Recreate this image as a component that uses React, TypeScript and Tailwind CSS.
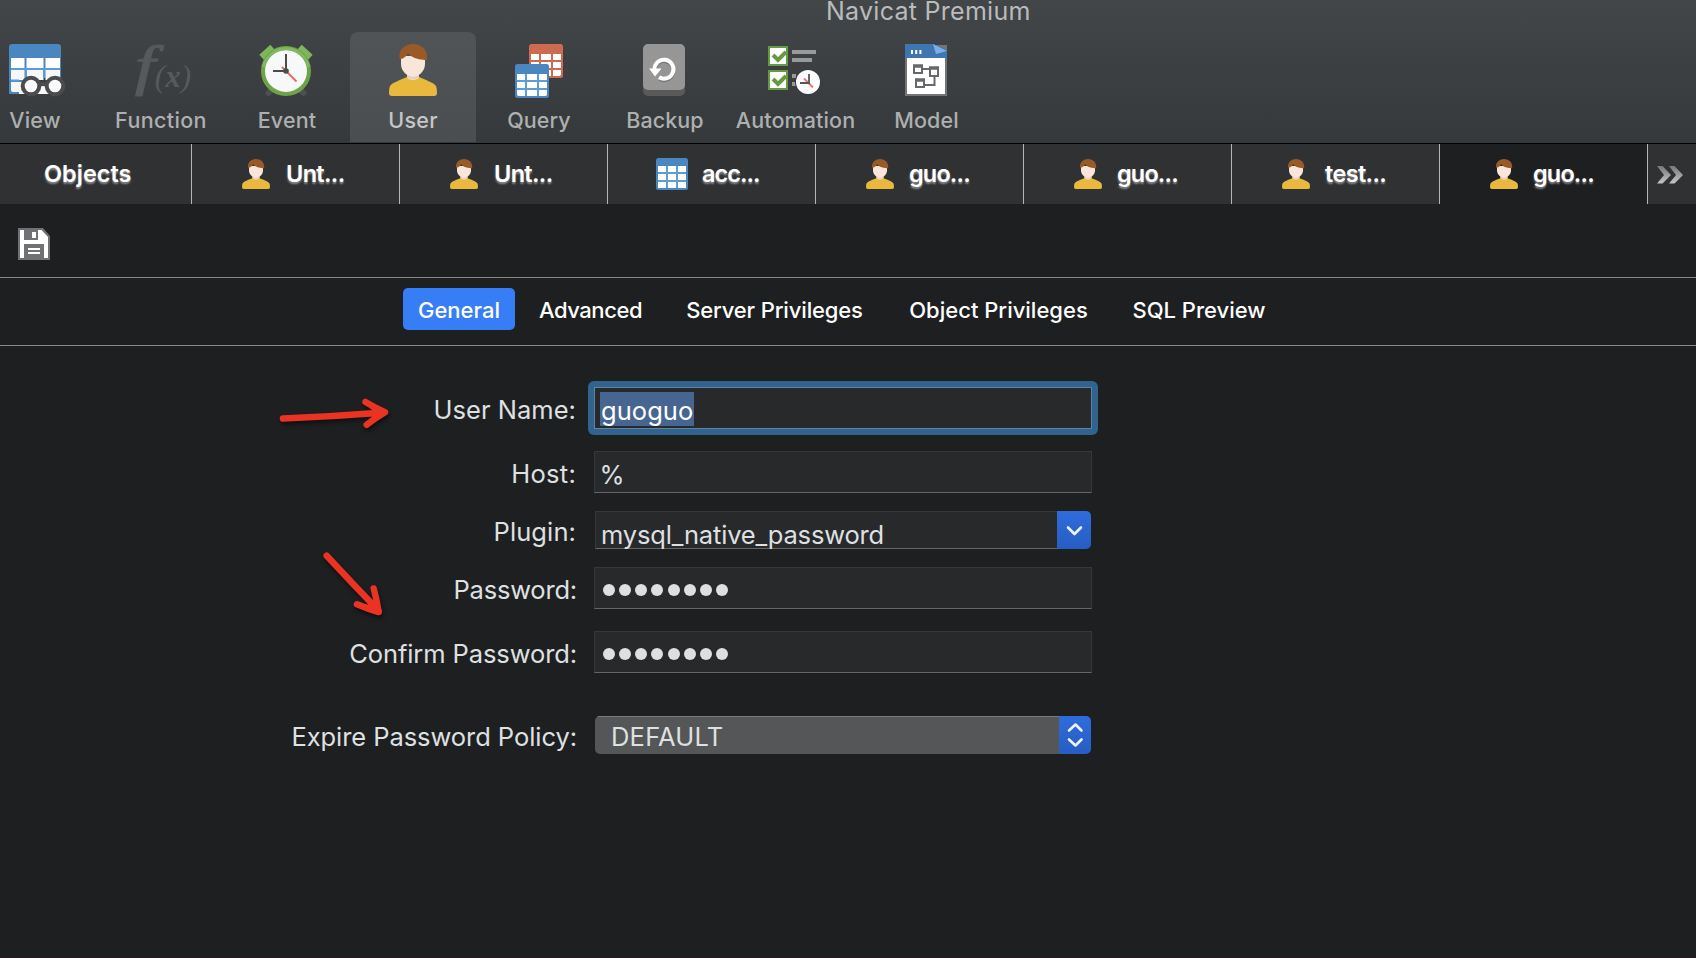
import type { ReactNode } from "react";

function ViewIcon() {
  return (
    <svg className="ml-[4px]" width="60" height="56" viewBox="0 0 60 56">
      <path d="M2 5a3 3 0 0 1 3-3h46a3 3 0 0 1 3 3v31H24v16H2z" fill="#4a86bf" />
      <path d="M4 16h13.500v10H4zM19.500 16h17v10h-17zM38.500 16H53v10H38.500z" fill="#fff" />
      <path d="M4 28h13.500v10H4zM19.500 28h17v10h-17zM38.500 28H53v10H38.500zM4 40h14v10H6a2 2 0 0 1-2-2zM12 42h36v10H12z" fill="#f6f7f9" />
      <path d="M4 38.500h8M19 28v8M37 28v8" stroke="#5b9bd8" strokeWidth="2" />
      <path d="M4 27h49" stroke="#5b9bd8" strokeWidth="2" />
      <g fill="#fafbfc" stroke="#4b4c4e" strokeWidth="4">
        <path d="M32 43q4-2 8 0" fill="none" />
        <circle cx="24" cy="44" r="8.300" />
        <circle cx="48" cy="44" r="8.300" />
      </g>
    </svg>
  );
}

function FunctionIcon() {
  return (
    <div className="flex h-14 w-[60px] items-end font-['Liberation_Serif',serif] text-[#58595a] italic">
      <span className="w-[24px] origin-left scale-x-[1.35] pl-[3px] text-[54px] leading-[64px] [-webkit-text-stroke:1.2px_#58595a]">f</span>
      <span className="text-[31px] leading-[42px]">
        (<span className="font-bold">x</span>)
      </span>
    </div>
  );
}

function EventIcon() {
  return (
    <svg className="-ml-[2px]" width="60" height="56" viewBox="0 0 60 56">
      <path d="M12.500 51l6-6M47.500 51l-6-6" stroke="#4d5051" strokeWidth="6" strokeLinecap="round" />
      <path d="M9 13l5-4.500M51 13l-5-4.500" stroke="#7fb65c" strokeWidth="8" strokeLinecap="square" />
      <circle cx="30" cy="29" r="23" fill="#f7f8fa" stroke="#6fa348" strokeWidth="4" />
      <path d="M7.500 25A23 23 0 0 1 52.500 25" fill="none" stroke="#82b860" strokeWidth="3" />
      <path d="M26 25l14.500 14.500" stroke="#e2705c" strokeWidth="2" />
      <path d="M30 12v17H17" fill="none" stroke="#4a4c4e" strokeWidth="2" />
      <circle cx="30" cy="29" r="2.800" fill="#4a4c4e" />
    </svg>
  );
}

function Person({ className }: { className: string }) {
  return (
    <svg className={className} viewBox="0 0 48 52" preserveAspectRatio="none">
      <path d="M18 30h12v7l-6 4-6-4z" fill="#efdcd0" />
      <path d="M18 33C12 36 4 38 1 42q-1 2-1 7a3 3 0 0 0 3 3h42a3 3 0 0 0 3-3q0-5-1-7C44 38 36 36 30 33q-1 3-6 3t-6-3z" fill="#e9b93e" />
      <path d="M12 12h24v8c0 7-6 12.500-12 12.500S12 27 12 20z" fill="#fae6d9" />
      <path d="M18 31q6 4 12 0v2q-6 4-12 0z" fill="#e4cdbf" />
      <path d="M10.500 15C9 5 17 0 24 0c9 0 15 6 14 16h-2Q23 15 19 9q-3 6-8.500 6z" fill="#9a5a28" />
    </svg>
  );
}

function QueryIcon() {
  return (
    <svg width="60" height="56" viewBox="0 0 60 56">
      <rect x="20" y="2" width="34" height="34" rx="2.500" fill="#cd6a50" />
      <path d="M22 12h8v6h-8zM32 12h10v6H32zM44 12h8v6h-8zM22 20h8v6h-8zM32 20h10v6H32zM44 20h8v6h-8zM22 28h8v6h-8zM32 28h10v6H32zM44 28h8v4q0 2-2 2h-6z" fill="#fff" />
      <rect x="6" y="22" width="34" height="34" rx="2.500" fill="#4a86bf" />
      <path d="M8 32h30v22H8z" fill="#5e9cd6" />
      <path d="M8 32h8v6H8zM18 32h10v6H18zM30 32h8v6h-8zM8 40h8v6H8zM18 40h10v6H18zM30 40h8v6h-8zM8 48h8v6h-6q-2 0-2-2zM18 48h10v6H18zM30 48h8v4q0 2-2 2h-6z" fill="#fff" />
    </svg>
  );
}

function BackupIcon() {
  return (
    <svg width="60" height="56" viewBox="0 0 60 56">
      <rect x="8" y="9" width="42" height="45" rx="5" fill="#59595a" />
      <rect x="8" y="2" width="42" height="46" rx="5" fill="#969697" />
      <path d="M19.500 29.500A9.500 9.500 0 1 1 24.500 37" fill="none" stroke="#000" strokeOpacity=".2" strokeWidth="4" />
      <path d="M19.500 28A9.500 9.500 0 1 1 24 35.300" fill="none" stroke="#fff" strokeWidth="4" />
      <path d="M14 26.500h12.500L20 34.500z" fill="#fff" />
    </svg>
  );
}

function AutomationIcon() {
  return (
    <svg className="-ml-[2px]" width="60" height="56" viewBox="0 0 60 56">
      <g fill="#fff" stroke="#649a41" strokeWidth="2">
        <rect x="4" y="5" width="18" height="18" />
        <rect x="4" y="29" width="18" height="18" />
      </g>
      <path d="M8 13l5 5 8-8M8 37l5 5 8-8" fill="none" stroke="#649a41" strokeWidth="4" />
      <path d="M27 10h24M27 18h20M27 34h4M27 42h4" stroke="#98999b" strokeWidth="4" />
      <circle cx="43" cy="40" r="13" fill="#3a3d3f" />
      <circle cx="43" cy="40" r="12" fill="#fdfdfe" />
      <path d="M39 36.500l9 9" stroke="#e57c68" strokeWidth="2" />
      <path d="M44 32v9h-9" fill="none" stroke="#55575a" strokeWidth="1.800" />
    </svg>
  );
}

function ModelIcon() {
  return (
    <svg className="-ml-[2px]" width="60" height="56" viewBox="0 0 60 56">
      <path d="M9 3h42v51H9z" fill="#737477" />
      <path d="M11 16h38v36H11z" fill="#fff" />
      <path d="M9 2h28l14 6v8H9z" fill="#3f76b0" />
      <path d="M37 2l14 7-11 3z" fill="#79b0ea" />
      <path d="M15 8h2v4h-2zM19.200 8h2v4h-2zM23.400 8h2v4h-2z" fill="#fff" />
      <g fill="none" stroke="#67686b" strokeWidth="2">
        <path d="M26 27h8M29 43h9.500v-8" />
        <path d="M18 24h8v7h-8zM34 26h8v8h-8zM20 38h8v7h-8z" fill="#fff" />
        <path d="M17 24h10M33 26h10M19 38h10" strokeWidth="3.500" />
      </g>
    </svg>
  );
}

function TableIcon() {
  return (
    <svg width="32" height="32" viewBox="0 0 32 32">
      <rect width="32" height="32" rx="2.500" fill="#4a86bf" />
      <path d="M2 8h28v22H2z" fill="#5e9cd6" />
      <path d="M2 8h8v6H2zM12 8h8v6h-8zM22 8h8v6h-8zM2 16h8v6H2zM12 16h8v6h-8zM22 16h8v6h-8zM2 24h8v6H2zM12 24h8v6h-8zM22 24h8v6h-8z" fill="#fff" />
    </svg>
  );
}

function SaveIcon() {
  return (
    <svg width="32" height="32" viewBox="0 0 32 32">
      <path d="M0 0h25l7 8v24H0z" fill="#707174" />
      <path d="M2 2h21.500L30 9v21H2z" fill="#fff" />
      <path d="M6 2h14v10H6zM6 16h20v14H6z" fill="#707174" />
      <path d="M14 4h4v6h-4zM10 20h12v2H10zM10 24h12v2H10z" fill="#fff" />
    </svg>
  );
}

type Tool = { label: string; icon: ReactNode; cell: string; text: string; active?: boolean };

const tools: Tool[] = [
  { label: "View", icon: <ViewIcon />, cell: "-ml-[28px] w-[126px]", text: "tracking-[0.17px]" },
  { label: "Function", icon: <FunctionIcon />, cell: "w-[126px]", text: "tracking-[0.36px]" },
  { label: "Event", icon: <EventIcon />, cell: "w-[126px]", text: "tracking-[0.19px]" },
  { label: "User", icon: <Person className="my-[2px] h-[52px] w-[48px]" />, cell: "w-[126px]", text: "tracking-[0.27px]", active: true },
  { label: "Query", icon: <QueryIcon />, cell: "w-[126px]", text: "tracking-[0.12px]" },
  { label: "Backup", icon: <BackupIcon />, cell: "w-[126px]", text: "tracking-[0.05px]" },
  { label: "Automation", icon: <AutomationIcon />, cell: "w-[135px]", text: "tracking-[0.12px]" },
  { label: "Model", icon: <ModelIcon />, cell: "w-[127px]", text: "tracking-[0.15px]" },
];

type Tab = { label: string; table?: boolean; gap: string; active?: boolean };

const tabs: Tab[] = [
  { label: "Unt...", gap: "pl-[16px] tracking-[-0.65px]" },
  { label: "Unt...", gap: "pl-[16px] tracking-[-0.65px]" },
  { label: "acc...", table: true, gap: "pl-[14px] tracking-[-0.95px]" },
  { label: "guo...", gap: "pl-[15px] tracking-[-0.85px]" },
  { label: "guo...", gap: "pl-[15px] tracking-[-0.85px]" },
  { label: "test...", gap: "pl-[15px] tracking-[-0.65px]" },
  { label: "guo...", gap: "pl-[15px] tracking-[-0.85px]", active: true },
];

const sections = [
  { label: "General", cls: "w-[112px] rounded-[5px] bg-[#377df5]" },
  { label: "Advanced", cls: "w-[151px] tracking-[-0.43px]" },
  { label: "Server Privileges", cls: "w-[217px] tracking-[-0.14px]" },
  { label: "Object Privileges", cls: "w-[231px]" },
  { label: "SQL Preview", cls: "w-[170px]" },
];

function Row({ label, cls, labelCls, children }: { label: string; cls: string; labelCls: string; children: ReactNode }) {
  return (
    <div className={`flex items-center ${cls}`}>
      <label className={`w-[576px] shrink-0 text-right leading-[32px] text-[#dfe0e1] ${labelCls}`}>{label}</label>
      {children}
    </div>
  );
}

const fieldCls =
  "ml-[18px] flex h-full w-[498px] items-center border border-[#363738] border-b-[#646566] bg-[#28292b] pl-[6px]";

function Dots() {
  return (
    <div className="flex gap-[4.150px] pl-[2px] pt-[4px]">
      {Array.from({ length: 8 }, (_, i) => (
        <span key={i} className="size-[12px] rounded-full bg-[#dedfe1]" />
      ))}
    </div>
  );
}

export default function App() {
  return (
    <div className="relative flex h-[958px] w-[1696px] flex-col overflow-hidden border-b border-[#251b21] bg-[#1e1f21] font-['Inter',sans-serif]">
      <header className="flex h-[143px] shrink-0 flex-col bg-linear-to-b from-[#424648] to-[#35393b]">
        <div className="h-[32px] pl-[826px] text-[25px] leading-[22px] font-[430] tracking-[0.27px] text-[#b9bbbc]">Navicat Premium</div>
        <nav className="flex h-[110px]">
          {tools.map((t) => (
            <div
              key={t.label}
              className={`flex shrink-0 flex-col items-center pt-[10px] ${t.cell} ${t.active ? "rounded-t-[8px] bg-linear-to-b from-[#505456] to-[#4a4e50] text-[#c5c7c8]" : "text-[#adafb0]"}`}
            >
              {t.icon}
              <span className={`mt-[10px] text-[21.5px] leading-[24px] font-[450] ${t.text}`}>{t.label}</span>
            </div>
          ))}
        </nav>
      </header>
      <div className="flex h-[61px] shrink-0 border-t border-black text-[23.5px] font-[560] text-white [text-shadow:0_2px_2px_rgba(255,255,255,0.45)]">
        <div className="w-[192px] border-r border-[#b5b6b7] bg-[#303133] pl-[44px] leading-[59px]">Objects</div>
        {tabs.map((t, i) => (
          <div
            key={i}
            className={`flex w-[208px] items-center border-r border-[#b5b6b7] ${t.table ? "pl-[48px]" : "pl-[50px]"} ${t.active ? "bg-[#1e1f21]" : "bg-[#303133]"}`}
          >
            {t.table ? <TableIcon /> : <Person className="h-[30px] w-[28px]" />}
            <span className={`leading-[60px] ${t.gap}`}>{t.label}</span>
          </div>
        ))}
        <div className="flex flex-1 items-center bg-[#303133] pl-[8px]">
          <svg width="28" height="20" viewBox="0 0 28 20">
            <defs>
              <linearGradient id="more" x1="0" y1="0" x2="0" y2="1">
                <stop offset="0" stopColor="#77787a" />
                <stop offset="1" stopColor="#c4c5c6" />
              </linearGradient>
            </defs>
            <path d="M1 2h5.500l8.500 9-8.500 8.500H1l7-8.500zM13 2h5.500l8.500 9-8.500 8.500H13l7-8.500z" fill="url(#more)" />
          </svg>
        </div>
      </div>
      <div className="h-[74px] shrink-0 border-b border-[#87888a] pl-[18px] pt-[24px]">
        <SaveIcon />
      </div>
      <div className="flex h-[68px] shrink-0 border-b border-[#87888a] pl-[403px] pt-[10px] text-[22px] font-[470] text-white">
        {sections.map((s) => (
          <div key={s.label} className={`h-[42px] text-center leading-[44px] ${s.cls}`}>
            {s.label}
          </div>
        ))}
      </div>
      <form className="flex flex-col pt-[35px] text-[25.5px] font-[440] text-[#dfe0e1]">
        <Row label="User Name:" cls="h-[54px]" labelCls="pt-[3px] tracking-[0.03px]">
          <div className="ml-[12px] h-full w-[510px] rounded-[6px] bg-[#32638f] p-[6px]">
            <div className="flex h-full items-start border border-[#5d84a6] bg-[#28292a] pl-[5px] pt-[4px]">
              <span className="h-[34px] w-[94px] bg-[#466590] pl-[1px] leading-[38px] tracking-[0.05px] text-white">guoguo</span>
            </div>
          </div>
        </Row>
        <Row label="Host:" cls="mt-[16px] h-[42px]" labelCls="pt-[4px] tracking-[0.25px]">
          <div className={fieldCls}>
            <span className="-ml-[1.5px] pt-[5px] leading-[34px]">%</span>
          </div>
        </Row>
        <Row label="Plugin:" cls="mt-[18px] h-[38px]" labelCls="pt-[4px] tracking-[0.1px]">
          <div className="ml-[19px] flex h-full w-[496px]">
            <div className="flex flex-1 items-center border border-r-0 border-[#363738] border-b-[#646566] bg-[#28292b] pl-[5px]">
              <span className="pt-[9px] leading-[27px] tracking-[-0.18px]">mysql_native_password</span>
            </div>
            <div className="flex w-[34px] items-center justify-center rounded-r-[5px] bg-linear-to-b from-[#2f6cdb] to-[#275dc4]">
              <svg width="18" height="12" viewBox="0 0 18 12" fill="none" stroke="#eef4ff" strokeWidth="2.600" strokeLinecap="round" strokeLinejoin="round">
                <path d="M3 3.500l6.500 6.500L16 3.500" />
              </svg>
            </div>
          </div>
        </Row>
        <Row label="Password:" cls="mt-[18px] h-[42px]" labelCls="-mr-px w-[577px]! pt-[3px] tracking-[-0.2px]">
          <div className={fieldCls}>
            <Dots />
          </div>
        </Row>
        <Row label="Confirm Password:" cls="mt-[22px] h-[42px]" labelCls="-mr-px w-[577px]! pt-[3px] tracking-[-0.1px]">
          <div className={fieldCls}>
            <Dots />
          </div>
        </Row>
        <Row label="Expire Password Policy:" cls="mt-[43px] h-[38px]" labelCls="-mr-px w-[577px]! pt-[3px] tracking-[-0.06px]">
          <div className="ml-[19px] flex h-full w-[496px] overflow-hidden rounded-[5px]">
            <div className="flex-1 border-t border-[#7b7c7d] bg-[#555657] pl-[16px] leading-[39px] tracking-[0.2px]">DEFAULT</div>
            <div className="flex w-[32px] items-center justify-center bg-linear-to-b from-[#2f6cdb] to-[#275dc4]">
              <svg width="18" height="28" viewBox="0 0 18 28" fill="none" stroke="#eef4ff" strokeWidth="2.600" strokeLinecap="round" strokeLinejoin="round">
                <path d="M3 9.500L9.500 3.500l6 6M3 18.500l6.500 6 6-6" />
              </svg>
            </div>
          </div>
        </Row>
      </form>
      <svg
        className="absolute left-[270px] top-[390px] drop-shadow-[1px_3px_2px_rgba(0,0,0,0.5)]"
        width="130"
        height="240"
        viewBox="270 390 130 240"
        fill="none"
        stroke="#ea3323"
        strokeWidth="6.500"
        strokeLinecap="round"
        strokeLinejoin="round"
      >
        <path d="M283 418.500q50-2 101-6M365.500 402q9 5.500 19.500 10.300q-10 6-18.300 12.500" />
        <path d="M326.700 555.700q25 27 52 55M373.700 588.500q3 11 5 23.500q-11-3-21.700-7.700" />
        <path d="M372 407.500l13 5-12 7M375.500 597l3 14-13-4.500" fill="#ea3323" strokeWidth="4" />
      </svg>
    </div>
  );
}
